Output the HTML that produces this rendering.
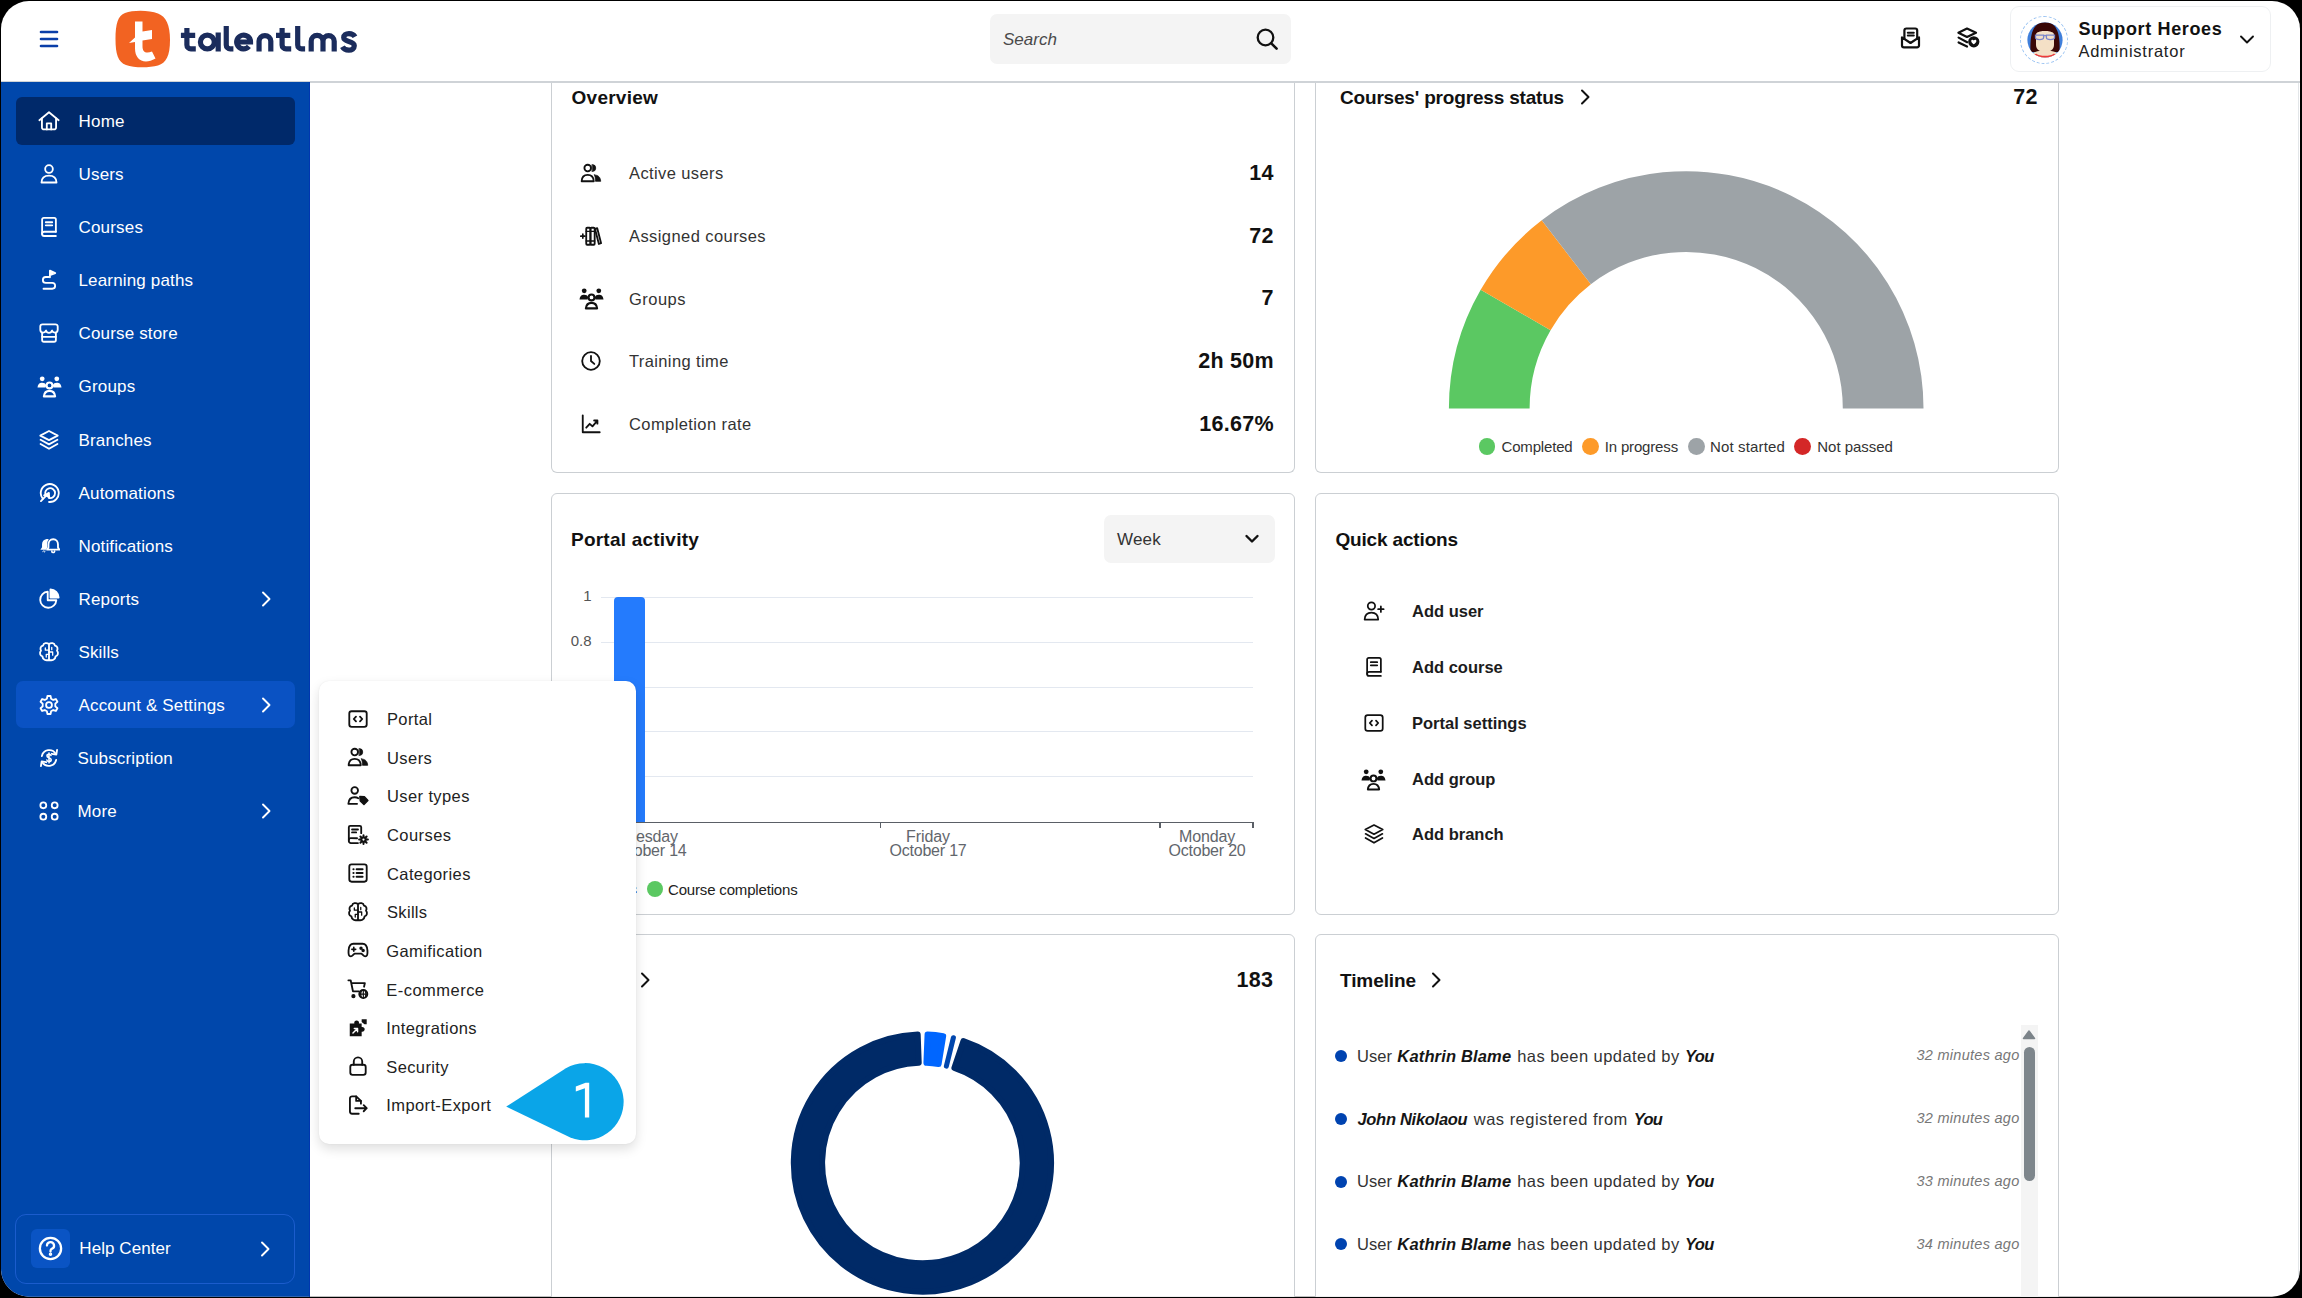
<!DOCTYPE html><html><head><meta charset="utf-8"><style>
html,body{margin:0;padding:0;background:#000;}
body{width:2302px;height:1298px;overflow:hidden;position:relative;font-family:"Liberation Sans",sans-serif;}
#win{position:absolute;left:0;top:0;width:2302px;height:1298px;background:#fff;overflow:hidden;clip-path:inset(1px 2px 1.3px 1px round 28px);}
.a{position:absolute;}
.t{position:absolute;white-space:nowrap;}
</style></head><body><div id="win">
<div class="a" style="left:0px;top:81px;width:2302px;height:2px;background:#cfd3d7;"></div>
<svg class="a" style="left:36px;top:27px" width="26" height="24" viewBox="0 0 26 24"><g stroke="#0a3ea8" stroke-width="2.6" stroke-linecap="round"><path d="M5 5 H21"/><path d="M5 12 H21"/><path d="M5 19 H21"/></g></svg>
<svg class="a" style="left:113px;top:9px" width="60" height="60" viewBox="0 0 60 60"><path d="M12 4 C20 1 36 1 45 4.5 C53 7.5 57 16 57 31 C57 47 53 54 45 56.5 C36 59 21 59 13 56 C5 53 2.5 45 2.5 30 C2.5 15 5 6.5 12 4 Z" fill="#f26322"/><path d="M22 12.5 H29.5 V22.5 L39 21 V30 L29.5 31.5 V37.5 C29.5 43 33 45 39 42.5 L42.5 49.5 C31 56 22 51 22 39.5 V33 L16 34 L22 28.5 Z" fill="#fff"/></svg>
<svg class="a" style="left:176px;top:20px" width="190" height="40" viewBox="176 20 190 40"><g fill="none" stroke="#1b2c5c" stroke-width="5.2"><path d="M186.9 28 V44.9 A4 4 0 0 0 190.9 48.9 H195.8 M180.9 35.4 H195.2"/><circle cx="207.35" cy="42" r="6.95"/><path d="M218.2 32.4 V51.5"/><path d="M226.25 25.9 V44.9 A4 4 0 0 0 230.25 48.9 H233.4"/><path d="M236.7 42 H250.5 A6.9 6.9 0 1 0 248.9 46.4"/><path d="M259.05 51.5 V41.2 A5.88 5.88 0 0 1 270.8 41.2 V51.5"/><path d="M282.1 28 V44.9 A4 4 0 0 0 286.1 48.9 H291.2 M276 35.4 H290.3"/><path d="M297.7 25.9 V44.9 A4 4 0 0 0 301.7 48.9 H305.1"/><path d="M311.2 51.5 V41.2 A5.9 5.9 0 0 1 323 41.2 V51.5 M323 41.2 A5.6 5.6 0 0 1 334.2 41.2 V51.5"/><path d="M355 36.8 C353.8 34.6 351.6 33.6 349 33.6 C345.9 33.6 343.7 35.2 343.7 37.6 C343.7 42.6 354.3 40.4 354.3 45.8 C354.3 48.6 351.8 50.2 348.8 50.2 C345.9 50.2 343.6 49 342.4 46.8"/></g></svg>
<div class="a" style="left:990px;top:14px;width:301px;height:50px;background:#f4f4f4;border-radius:7px;"></div>
<div class="t" style="top:31.01px;font-size:17px;line-height:17px;color:#4a4a4a;font-style:italic;letter-spacing:0.022px;left:1003.00px;">Search</div>
<svg class="a" style="left:1254.50px;top:26.50px;" width="24" height="24" viewBox="0 0 24 24" fill="none" stroke="#111" stroke-width="2.3" stroke-linecap="round" stroke-linejoin="round"><circle cx="10.5" cy="10.5" r="7.8"/><path d="M16.3 16.3 L21.6 21.6" stroke-width="2.6"/></svg>
<svg class="a" style="left:1896px;top:24px" width="30" height="28" viewBox="1896 24 30 28"><g fill="none" stroke="#111" stroke-width="2.2" stroke-linecap="round" stroke-linejoin="round"><path d="M1904.4 38.5 V30.5 a2 2 0 0 1 2-2 H1915.2 a2 2 0 0 1 2 2 V38.5"/><path d="M1907.8 32.7 H1913.8 M1907.8 35.4 H1913.8" stroke-width="2"/><path d="M1902 37.4 V45.4 a1.9 1.9 0 0 0 1.9 1.9 H1917.1 a1.9 1.9 0 0 0 1.9-1.9 V37.4 L1910.5 43 Z"/></g></svg>
<svg class="a" style="left:1954px;top:24px" width="30" height="28" viewBox="1954 24 30 28"><g fill="none" stroke="#111" stroke-width="2.2" stroke-linecap="round" stroke-linejoin="round"><path d="M1967 28.6 L1976 32.8 L1967 37 L1958.4 32.8 Z"/><path d="M1958.6 37.6 L1967.2 42.2 M1958.6 42.4 L1967 46.6"/><circle cx="1973.8" cy="41.8" r="5.6" fill="#111" stroke="none"/><path d="M1971.2 40.9 C1971.2 39.6 1972.9 39.1 1973.8 40.4 C1974.7 39.1 1976.4 39.6 1976.4 40.9 C1976.4 42.4 1973.8 44.3 1973.8 44.3 C1973.8 44.3 1971.2 42.4 1971.2 40.9 Z" fill="#fff" stroke="none"/></g></svg>
<div class="a" style="left:2010px;top:6px;width:261px;height:66px;border:1px solid #eef0f2;border-radius:9px;box-sizing:border-box;"></div>
<div class="a" style="left:2020px;top:16px;width:46px;height:46px;border:1.3px dashed #9cc4f2;border-radius:50%;"></div>
<svg class="a" style="left:2026px;top:21px" width="38" height="38" viewBox="2026 21 38 38"><defs><clipPath id="av"><circle cx="2045" cy="40" r="17.6"/></clipPath></defs><g clip-path="url(#av)">
<rect x="2026" y="21" width="38" height="38" fill="#3f7fdb"/>
<path d="M2030.5 52 C2030 40 2030.5 22 2045 22 C2059.5 22 2060 40 2059.5 52 Z" fill="#3a0707"/>
<path d="M2036 36 C2036 30.5 2039.5 29 2045 29 C2050.5 29 2054 30.5 2054 36 V45 C2054 49.5 2050 52 2045 52 C2040 52 2036 49.5 2036 45 Z" fill="#f4e0c6"/>
<path d="M2034.5 34 C2036 28 2041 26.5 2045 26.5 C2049 26.5 2054 28 2055.5 34 C2052 31.5 2048 31 2045 31 C2042 31 2038 31.5 2034.5 34 Z" fill="#3a0707"/>
<path d="M2028 60 C2029 53.5 2035 50.5 2045 50.5 C2055 50.5 2061 53.5 2062 60 Z" fill="#f4e0c6"/>
<path d="M2029 60 C2031 55.5 2034 54 2036.5 53.8 C2039 56.5 2051 56.5 2053.5 53.8 C2056 54 2059 55.5 2061 60 Z" fill="#ee3b3b"/>
<g fill="none" stroke="#7b86cc" stroke-width="1.3"><path d="M2035.5 35.2 H2043.6 V37.5 C2043.6 39 2042.5 39.6 2039.6 39.6 C2036.6 39.6 2035.5 39 2035.5 37.5 Z"/><path d="M2046.4 35.2 H2054.5 V37.5 C2054.5 39 2053.4 39.6 2050.4 39.6 C2047.5 39.6 2046.4 39 2046.4 37.5 Z"/><path d="M2043.6 35.6 H2046.4"/></g>
</g></svg>
<div class="t" style="top:19.96px;font-size:18px;line-height:18px;color:#111;font-weight:700;letter-spacing:0.641px;left:2078.40px;">Support Heroes</div>
<div class="t" style="top:43.33px;font-size:16.5px;line-height:16.5px;color:#222;letter-spacing:0.754px;left:2078.40px;">Administrator</div>
<svg class="a" style="left:2238.00px;top:30.00px;" width="18" height="18" viewBox="0 0 18 18" fill="none" stroke="#111" stroke-width="1.9" stroke-linecap="round" stroke-linejoin="round"><path d="M3 6.5 L9 12.5 L15 6.5"/></svg>
<div class="a" style="left:0px;top:82px;width:310px;height:1216px;background:#0047ab;"></div>
<div class="a" style="left:16px;top:97px;width:279px;height:48px;background:#00296a;border-radius:6px;"></div>
<div class="a" style="left:309px;top:82px;width:1px;height:1216px;background:#0037b0;"></div>
<div class="a" style="left:16px;top:681px;width:279px;height:47px;background:#0a52c3;border-radius:7px;"></div>
<svg class="a" style="left:38.00px;top:110.00px;" width="22" height="22" viewBox="0 0 24 24" fill="none" stroke="#fff" stroke-width="2" stroke-linecap="round" stroke-linejoin="round"><path d="M1.5 11.2 L12 2.5 L22.5 11.2"/><path d="M4.3 9.2 V19 a2.2 2.2 0 0 0 2.2 2.2 H17.5 a2.2 2.2 0 0 0 2.2-2.2 V9.2"/><path d="M9.6 21.2 V14.6 H14.4 V21.2"/></svg>
<div class="t" style="top:112.91px;font-size:17px;line-height:17px;color:#fff;letter-spacing:0.227px;left:78.50px;">Home</div>
<svg class="a" style="left:38.00px;top:163.10px;" width="22" height="22" viewBox="0 0 24 24" fill="none" stroke="#fff" stroke-width="2" stroke-linecap="round" stroke-linejoin="round"><circle cx="12" cy="6.6" r="4.2"/><path d="M3.8 21.3 C4 16 7.5 13.8 12 13.8 C16.5 13.8 20 16 20.2 21.3 Z"/></svg>
<div class="t" style="top:166.01px;font-size:17px;line-height:17px;color:#fff;letter-spacing:0.178px;left:78.50px;">Users</div>
<svg class="a" style="left:38.00px;top:216.20px;" width="22" height="22" viewBox="0 0 24 24" fill="none" stroke="#fff" stroke-width="2" stroke-linecap="round" stroke-linejoin="round"><path d="M19.5 17.2 V3.8 a1.8 1.8 0 0 0-1.8-1.8 H6.3 a1.8 1.8 0 0 0-1.8 1.8 V19.5"/><path d="M4.5 19.3 a2.2 2.2 0 0 1 2.2-2.1 H19.5 M19.5 21.8 H6.7 a2.2 2.2 0 0 1-2.2-2.2"/><path d="M8.5 6.8 H15.5 M8.5 10.2 H15.5"/></svg>
<div class="t" style="top:219.11px;font-size:17px;line-height:17px;color:#fff;letter-spacing:0.181px;left:78.50px;">Courses</div>
<svg class="a" style="left:38.00px;top:269.30px;" width="22" height="22" viewBox="0 0 24 24" fill="none" stroke="#fff" stroke-width="2" stroke-linecap="round" stroke-linejoin="round"><path d="M6 21.5 H15.5 a3.2 3.2 0 0 0 0-6.4 H8.5 a3.2 3.2 0 0 1 0-6.4 H11.5"/><path d="M13 9 V1.8 L18.8 4.4 L13 6.8" fill="#fff"/></svg>
<div class="t" style="top:272.21px;font-size:17px;line-height:17px;color:#fff;letter-spacing:0.161px;left:78.50px;">Learning paths</div>
<svg class="a" style="left:38.00px;top:322.40px;" width="22" height="22" viewBox="0 0 24 24" fill="none" stroke="#fff" stroke-width="2" stroke-linecap="round" stroke-linejoin="round"><path d="M5 2.5 H19 a2.5 2.5 0 0 1 2.5 2.5 V8.5 a3 3 0 0 1-3 3 a3.2 3.2 0 0 1-3.2-2.2 a3.4 3.4 0 0 1-6.6 0 a3.2 3.2 0 0 1-3.2 2.2 a3 3 0 0 1-3-3 V5 A2.5 2.5 0 0 1 5 2.5 Z"/><path d="M4.5 12 V19.5 a2 2 0 0 0 2 2 H17.5 a2 2 0 0 0 2-2 V12"/><path d="M4.5 16.2 H19.5"/></svg>
<div class="t" style="top:325.31px;font-size:17px;line-height:17px;color:#fff;letter-spacing:0.162px;left:78.50px;">Course store</div>
<svg class="a" style="left:36.50px;top:374.00px;" width="25" height="25" viewBox="0 0 24 24" fill="none" stroke="#fff" stroke-width="2" stroke-linecap="round" stroke-linejoin="round"><circle cx="12" cy="11" r="2.8"/><path d="M6.6 21.5 C7 17.8 9.2 16.2 12 16.2 C14.8 16.2 17 17.8 17.4 21.5 Z"/><circle cx="5" cy="4.6" r="2.3" fill="#fff" stroke="none"/><path d="M0.5 13 C0.8 9.5 2.6 8.3 5 8.3 C6.8 8.3 8.2 9 8.9 10.8 L8.2 13 Z" fill="#fff" stroke="none"/><circle cx="19" cy="4.6" r="2.3" fill="#fff" stroke="none"/><path d="M23.5 13 C23.2 9.5 21.4 8.3 19 8.3 C17.2 8.3 15.8 9 15.1 10.8 L15.8 13 Z" fill="#fff" stroke="none"/></svg>
<div class="t" style="top:378.41px;font-size:17px;line-height:17px;color:#fff;letter-spacing:0.186px;left:78.50px;">Groups</div>
<svg class="a" style="left:38.00px;top:428.60px;" width="22" height="22" viewBox="0 0 24 24" fill="none" stroke="#fff" stroke-width="2" stroke-linecap="round" stroke-linejoin="round"><path d="M12 2.2 L21.5 7.2 L12 12.2 L2.5 7.2 Z"/><path d="M2.8 11.8 L12 16.8 L21.2 11.8"/><path d="M2.8 16.4 L12 21.6 L21.2 16.4"/></svg>
<div class="t" style="top:431.51px;font-size:17px;line-height:17px;color:#fff;letter-spacing:0.180px;left:78.50px;">Branches</div>
<svg class="a" style="left:38.00px;top:481.70px;" width="22" height="22" viewBox="0 0 24 24" fill="none" stroke="#fff" stroke-width="2" stroke-linecap="round" stroke-linejoin="round"><path d="M5.2 18.2 A9.8 9.8 0 1 1 12 21.8"/><path d="M8.4 14.6 A5.4 5.4 0 1 1 12 17.4"/><path d="M11.6 12.2 L3.2 20.8"/><path d="M11.8 12 L12.3 17.2 L10.2 15.4 L6.7 14.6 Z" fill="#fff"/></svg>
<div class="t" style="top:484.61px;font-size:17px;line-height:17px;color:#fff;letter-spacing:0.172px;left:78.50px;">Automations</div>
<svg class="a" style="left:38.00px;top:534.80px;" width="22" height="22" viewBox="0 0 24 24" fill="none" stroke="#fff" stroke-width="2" stroke-linecap="round" stroke-linejoin="round"><path d="M16.6 4.6 C13.2 4.6 11.4 7.4 11.4 10.4 V13.6 L9.9 16 H23.3 L21.8 13.6 V10.4 C21.8 7.4 20 4.6 16.6 4.6 Z" stroke-width="2"/><path d="M15.1 17.6 a1.5 1.5 0 0 0 3 0" stroke-width="1.8"/><path d="M9.4 4.4 C6.2 4.8 4.4 7.4 4.4 10.4 V13.4 L2.6 16 H8.8 L10 13.8 V10.4 C10 8 10.5 5.9 11.8 4.8 C11.1 4.5 10.3 4.4 9.4 4.4 Z" fill="#fff" stroke="none"/><path d="M5.2 18 L6.4 17.2 M7.2 18.6 L7.6 17.4" stroke-width="1"/></svg>
<div class="t" style="top:537.71px;font-size:17px;line-height:17px;color:#fff;letter-spacing:0.142px;left:78.50px;">Notifications</div>
<svg class="a" style="left:38.00px;top:587.90px;" width="22" height="22" viewBox="0 0 24 24" fill="none" stroke="#fff" stroke-width="2" stroke-linecap="round" stroke-linejoin="round"><path d="M10.6 4 A8.8 8.8 0 1 0 20 13.4 H10.6 Z"/><path d="M13.6 1.5 A9 9 0 0 1 22.5 10.4 H13.6 Z" fill="#fff"/></svg>
<div class="t" style="top:590.81px;font-size:17px;line-height:17px;color:#fff;letter-spacing:0.170px;left:78.50px;">Reports</div>
<svg class="a" style="left:256.50px;top:589.90px;" width="18" height="18" viewBox="0 0 18 18" fill="none" stroke="#fff" stroke-width="1.9" stroke-linecap="round" stroke-linejoin="round"><path d="M6 2.5 L12.5 9 L6 15.5"/></svg>
<svg class="a" style="left:38.00px;top:641.00px;" width="22" height="22" viewBox="0 0 24 24" fill="none" stroke="#fff" stroke-width="2" stroke-linecap="round" stroke-linejoin="round"><path d="M12 3.5 V21 M12 3.5 C10 1.5 6 2 5.5 5 C2.8 5.4 2 8.5 3.3 10.5 C1.3 12.5 2.2 16.3 4.8 16.8 C5 20 8.5 22 12 20.5 C15.5 22 19 20 19.2 16.8 C21.8 16.3 22.7 12.5 20.7 10.5 C22 8.5 21.2 5.4 18.5 5 C18 2 14 1.5 12 3.5 Z"/><path d="M12 10 H8 V7.5 M12 14.5 H9 V17.5 M12 12 H16 V15.5 M15 7 V9.5" stroke-width="1.4"/></svg>
<div class="t" style="top:643.91px;font-size:17px;line-height:17px;color:#fff;letter-spacing:0.132px;left:78.50px;">Skills</div>
<svg class="a" style="left:38.00px;top:694.10px;" width="22" height="22" viewBox="0 0 24 24" fill="none" stroke="#fff" stroke-width="2" stroke-linecap="round" stroke-linejoin="round"><path d="M10.3 2.2 H13.7 L14.3 5.2 L16.6 6.5 L19.5 5.5 L21.2 8.4 L18.9 10.5 V13.5 L21.2 15.6 L19.5 18.5 L16.6 17.5 L14.3 18.8 L13.7 21.8 H10.3 L9.7 18.8 L7.4 17.5 L4.5 18.5 L2.8 15.6 L5.1 13.5 V10.5 L2.8 8.4 L4.5 5.5 L7.4 6.5 L9.7 5.2 Z"/><circle cx="12" cy="12" r="3.2"/></svg>
<div class="t" style="top:697.01px;font-size:17px;line-height:17px;color:#fff;letter-spacing:0.160px;left:78.50px;">Account &amp; Settings</div>
<svg class="a" style="left:256.50px;top:696.10px;" width="18" height="18" viewBox="0 0 18 18" fill="none" stroke="#fff" stroke-width="1.9" stroke-linecap="round" stroke-linejoin="round"><path d="M6 2.5 L12.5 9 L6 15.5"/></svg>
<svg class="a" style="left:38.00px;top:747.20px;" width="22" height="22" viewBox="0 0 24 24" fill="none" stroke="#fff" stroke-width="2" stroke-linecap="round" stroke-linejoin="round"><path d="M4.2 10 A8.2 8.2 0 0 1 19.4 7.6"/><path d="M19.8 14 A8.2 8.2 0 0 1 4.6 16.4"/><path d="M20.8 3.2 L20 8.4 L15 7.4" /><path d="M3.2 20.8 L4 15.6 L9 16.6"/><path d="M14.2 9.3 C13.8 8.3 12.9 7.9 12 7.9 C10.7 7.9 9.8 8.6 9.8 9.7 C9.8 12.2 14.4 11.2 14.4 13.9 C14.4 15.1 13.4 15.9 12 15.9 C10.9 15.9 10 15.3 9.7 14.3 M12 6.5 V17.3" stroke-width="1.7"/></svg>
<div class="t" style="top:750.11px;font-size:17px;line-height:17px;color:#fff;letter-spacing:0.156px;left:77.50px;">Subscription</div>
<svg class="a" style="left:38.00px;top:800.30px;" width="22" height="22" viewBox="0 0 24 24" fill="none" stroke="#fff" stroke-width="2" stroke-linecap="round" stroke-linejoin="round"><circle cx="5.8" cy="5.8" r="3.2"/><circle cx="18.2" cy="5.8" r="3.2"/><circle cx="5.8" cy="18.2" r="3.2"/><circle cx="18.2" cy="18.2" r="3.2"/></svg>
<div class="t" style="top:803.21px;font-size:17px;line-height:17px;color:#fff;letter-spacing:0.194px;left:77.50px;">More</div>
<svg class="a" style="left:256.50px;top:802.30px;" width="18" height="18" viewBox="0 0 18 18" fill="none" stroke="#fff" stroke-width="1.9" stroke-linecap="round" stroke-linejoin="round"><path d="M6 2.5 L12.5 9 L6 15.5"/></svg>
<div class="a" style="left:15px;top:1214px;width:280px;height:70px;border:1.2px solid #1b5ccc;border-radius:11px;box-sizing:border-box;"></div>
<div class="a" style="left:31px;top:1229px;width:39px;height:39px;background:#0a54c4;border-radius:6px;"></div>
<svg class="a" style="left:37.50px;top:1236.10px;" width="25" height="25" viewBox="0 0 24 24" fill="none" stroke="#fff" stroke-width="2.2" stroke-linecap="round" stroke-linejoin="round"><circle cx="12" cy="12" r="10.2"/><path d="M8.6 9.2 a3.4 3.4 0 1 1 4.6 3.2 c-0.9 0.4-1.2 1-1.2 1.9 v0.6"/><circle cx="12" cy="17.6" r="0.6" fill="#fff"/></svg>
<div class="t" style="top:1240.21px;font-size:17px;line-height:17px;color:#fff;letter-spacing:0.071px;left:79.30px;">Help Center</div>
<svg class="a" style="left:255.50px;top:1240.00px;" width="18" height="18" viewBox="0 0 18 18" fill="none" stroke="#fff" stroke-width="1.9" stroke-linecap="round" stroke-linejoin="round"><path d="M6 2.5 L12.5 9 L6 15.5"/></svg>
<div class="a" style="left:551px;top:83px;width:744px;height:390px;border:1.2px solid #cbcfd3;box-sizing:border-box;border-radius:6px;background:#fff;border-top:none;border-top-left-radius:0;border-top-right-radius:0;"></div>
<div class="t" style="top:87.92px;font-size:19px;line-height:19px;color:#111;font-weight:700;letter-spacing:0.238px;left:571.60px;">Overview</div>
<svg class="a" style="left:580.00px;top:162.00px;" width="22" height="22" viewBox="0 0 24 24" fill="none" stroke="#111" stroke-width="2" stroke-linecap="round" stroke-linejoin="round"><circle cx="8.4" cy="6.6" r="3.6"/><path d="M1.8 21 C2 16 4.6 14 8.4 14 C12.2 14 14.8 16 15 21 Z"/><path d="M13.4 2.8 A3.8 3.8 0 0 1 13.4 10.4 Z" fill="#111" stroke="#111" stroke-width="0.8"/><path d="M15.8 14.1 C20 14.3 22.3 16.6 22.6 21.1 H16.9 C16.8 18 16.5 15.6 15.8 14.1 Z" fill="#111" stroke="#111" stroke-width="0.8"/></svg>
<div class="t" style="top:165.03px;font-size:16.5px;line-height:16.5px;color:#333;letter-spacing:0.389px;left:629.00px;">Active users</div>
<div class="t" style="top:162.80px;font-size:21.5px;line-height:21.5px;color:#111;font-weight:700;letter-spacing:0.239px;right:1028.26px;">14</div>
<svg class="a" style="left:580.00px;top:224.80px;" width="22" height="22" viewBox="0 0 24 24" fill="none" stroke="#111" stroke-width="2" stroke-linecap="round" stroke-linejoin="round"><rect x="6.8" y="3" width="4.6" height="18.5" rx="1"/><rect x="11.4" y="3" width="4.6" height="18.5" rx="1"/><path d="M16.4 4.3 L18.8 3.5 L23 19.9 L20.6 20.7 Z"/><path d="M0.8 12.2 H5.4 M3.1 9.9 V14.5" stroke-width="1.8"/><path d="M6.8 7 H16 M6.8 17.5 H16" stroke-width="1.5"/></svg>
<div class="t" style="top:227.83px;font-size:16.5px;line-height:16.5px;color:#333;letter-spacing:0.423px;left:629.00px;">Assigned courses</div>
<div class="t" style="top:225.60px;font-size:21.5px;line-height:21.5px;color:#111;font-weight:700;letter-spacing:0.239px;right:1028.26px;">72</div>
<svg class="a" style="left:578.50px;top:286.10px;" width="25" height="25" viewBox="0 0 24 24" fill="none" stroke="#111" stroke-width="2" stroke-linecap="round" stroke-linejoin="round"><circle cx="12" cy="11" r="2.8"/><path d="M6.6 21.5 C7 17.8 9.2 16.2 12 16.2 C14.8 16.2 17 17.8 17.4 21.5 Z"/><circle cx="5" cy="4.6" r="2.3" fill="#111" stroke="none"/><path d="M0.5 13 C0.8 9.5 2.6 8.3 5 8.3 C6.8 8.3 8.2 9 8.9 10.8 L8.2 13 Z" fill="#111" stroke="none"/><circle cx="19" cy="4.6" r="2.3" fill="#111" stroke="none"/><path d="M23.5 13 C23.2 9.5 21.4 8.3 19 8.3 C17.2 8.3 15.8 9 15.1 10.8 L15.8 13 Z" fill="#111" stroke="none"/></svg>
<div class="t" style="top:290.63px;font-size:16.5px;line-height:16.5px;color:#333;letter-spacing:0.469px;left:629.00px;">Groups</div>
<div class="t" style="top:288.40px;font-size:21.5px;line-height:21.5px;color:#111;font-weight:700;letter-spacing:0.239px;right:1028.26px;">7</div>
<svg class="a" style="left:580.00px;top:350.40px;" width="22" height="22" viewBox="0 0 24 24" fill="none" stroke="#111" stroke-width="2" stroke-linecap="round" stroke-linejoin="round"><circle cx="12" cy="12" r="9.6"/><path d="M12 6.5 V12 L15.6 15.2"/></svg>
<div class="t" style="top:353.43px;font-size:16.5px;line-height:16.5px;color:#333;letter-spacing:0.379px;left:629.00px;">Training time</div>
<div class="t" style="top:351.20px;font-size:21.5px;line-height:21.5px;color:#111;font-weight:700;letter-spacing:0.247px;right:1028.25px;">2h 50m</div>
<svg class="a" style="left:580.00px;top:413.20px;" width="22" height="22" viewBox="0 0 24 24" fill="none" stroke="#111" stroke-width="2" stroke-linecap="round" stroke-linejoin="round"><path d="M3 2.5 V21 H21.5"/><path d="M6.8 16 L10.6 11.8 L13.6 14.6 L19 8.4 M15.4 8.2 H19 V11.6"/></svg>
<div class="t" style="top:416.23px;font-size:16.5px;line-height:16.5px;color:#333;letter-spacing:0.404px;left:629.00px;">Completion rate</div>
<div class="t" style="top:414.00px;font-size:21.5px;line-height:21.5px;color:#111;font-weight:700;letter-spacing:0.243px;right:1028.26px;">16.67%</div>
<div class="a" style="left:1315px;top:83px;width:744px;height:390px;border:1.2px solid #cbcfd3;box-sizing:border-box;border-radius:6px;background:#fff;border-top:none;border-top-left-radius:0;border-top-right-radius:0;"></div>
<div class="t" style="top:87.92px;font-size:19px;line-height:19px;color:#111;font-weight:700;letter-spacing:-0.182px;left:1340.00px;">Courses' progress status</div>
<svg class="a" style="left:1575.50px;top:88.00px;" width="18" height="18" viewBox="0 0 18 18" fill="none" stroke="#111" stroke-width="2" stroke-linecap="round" stroke-linejoin="round"><path d="M6 2.5 L12.5 9 L6 15.5"/></svg>
<div class="t" style="top:87.30px;font-size:21.5px;line-height:21.5px;color:#111;font-weight:700;letter-spacing:0.239px;right:264.26px;">72</div>
<svg class="a" style="left:1315px;top:82px" width="744" height="391" viewBox="0 0 744 391"><path d="M133.90 326.50 A237.3 237.3 0 0 1 165.69 207.85 L235.58 248.20 A156.6 156.6 0 0 0 214.60 326.50 Z" fill="#5bc862"/><path d="M165.69 207.85 A237.3 237.3 0 0 1 226.74 138.24 L275.87 202.26 A156.6 156.6 0 0 0 235.58 248.20 Z" fill="#fd9a29"/><path d="M226.74 138.24 A237.3 237.3 0 0 1 608.50 326.50 L527.80 326.50 A156.6 156.6 0 0 0 275.87 202.26 Z" fill="#9da3a7"/></svg>
<div class="a" style="left:1478.60px;top:438.30px;width:16.8px;height:16.8px;border-radius:50%;background:#5bc862"></div>
<div class="t" style="top:439.10px;font-size:15px;line-height:15px;color:#333;letter-spacing:-0.171px;left:1501.50px;">Completed</div>
<div class="a" style="left:1582.30px;top:438.30px;width:16.8px;height:16.8px;border-radius:50%;background:#fd9a29"></div>
<div class="t" style="top:439.10px;font-size:15px;line-height:15px;color:#333;letter-spacing:-0.158px;left:1604.70px;">In progress</div>
<div class="a" style="left:1688.40px;top:438.30px;width:16.8px;height:16.8px;border-radius:50%;background:#9da3a7"></div>
<div class="t" style="top:439.10px;font-size:15px;line-height:15px;color:#333;letter-spacing:0.148px;left:1710.00px;">Not started</div>
<div class="a" style="left:1794.40px;top:438.30px;width:16.8px;height:16.8px;border-radius:50%;background:#d42727"></div>
<div class="t" style="top:439.10px;font-size:15px;line-height:15px;color:#333;letter-spacing:-0.038px;left:1817.30px;">Not passed</div>
<div class="a" style="left:551px;top:493px;width:744px;height:421.5px;border:1.2px solid #cbcfd3;box-sizing:border-box;border-radius:6px;background:#fff;"></div>
<div class="t" style="top:529.92px;font-size:19px;line-height:19px;color:#111;font-weight:700;letter-spacing:0.226px;left:571.00px;">Portal activity</div>
<div class="a" style="left:1104px;top:514.5px;width:171px;height:48.0px;background:#f4f4f4;border-radius:7px;"></div>
<div class="t" style="top:530.61px;font-size:17px;line-height:17px;color:#333;letter-spacing:0.163px;left:1117.00px;">Week</div>
<svg class="a" style="left:1242.60px;top:530.00px;" width="18" height="18" viewBox="0 0 18 18" fill="none" stroke="#111" stroke-width="2.4" stroke-linecap="round" stroke-linejoin="round"><path d="M3.5 6 L9 11.5 L14.5 6"/></svg>
<div class="a" style="left:601px;top:596.5px;width:652px;height:1.0px;background:#e3e8f0;"></div>
<div class="a" style="left:601px;top:641.5px;width:652px;height:1.0px;background:#e3e8f0;"></div>
<div class="a" style="left:601px;top:686.5px;width:652px;height:1.0px;background:#e3e8f0;"></div>
<div class="a" style="left:601px;top:731.0px;width:652px;height:1.0px;background:#e3e8f0;"></div>
<div class="a" style="left:601px;top:776.0px;width:652px;height:1.0px;background:#e3e8f0;"></div>
<div class="a" style="left:601px;top:821.5px;width:653px;height:1.5px;background:#5a5f66;"></div>
<div class="a" style="left:879.9px;top:822px;width:1.400000000000091px;height:6px;background:#5a5f66;"></div>
<div class="a" style="left:1159.3px;top:822px;width:1.400000000000091px;height:6px;background:#5a5f66;"></div>
<div class="a" style="left:1252.3px;top:822px;width:1.400000000000091px;height:6px;background:#5a5f66;"></div>
<div class="a" style="left:614px;top:597px;width:30.5px;height:225px;background:#247bfd;border-radius:4px 4px 0 0;"></div>
<div class="t" style="top:587.80px;font-size:15px;line-height:15px;color:#555;right:1710.50px;">1</div>
<div class="t" style="top:632.80px;font-size:15px;line-height:15px;color:#555;right:1710.50px;">0.8</div>
<div class="t" style="top:677.80px;font-size:15px;line-height:15px;color:#555;right:1710.50px;">0.6</div>
<div class="t" style="top:722.80px;font-size:15px;line-height:15px;color:#555;right:1710.50px;">0.4</div>
<div class="t" style="top:767.80px;font-size:15px;line-height:15px;color:#555;right:1710.50px;">0.2</div>
<div class="t" style="top:812.80px;font-size:15px;line-height:15px;color:#555;right:1710.50px;">0</div>
<div class="t" style="top:828.66px;font-size:16px;line-height:16px;color:#62666c;letter-spacing:-0.130px;left:618.07px;">Tuesday</div>
<div class="t" style="top:843.26px;font-size:16px;line-height:16px;color:#62666c;letter-spacing:-0.216px;left:609.50px;">October 14</div>
<div class="t" style="top:828.66px;font-size:16px;line-height:16px;color:#62666c;letter-spacing:-0.111px;left:906.11px;">Friday</div>
<div class="t" style="top:843.26px;font-size:16px;line-height:16px;color:#62666c;letter-spacing:-0.216px;left:889.50px;">October 17</div>
<div class="t" style="top:828.66px;font-size:16px;line-height:16px;color:#62666c;letter-spacing:-0.142px;left:1178.97px;">Monday</div>
<div class="t" style="top:843.26px;font-size:16px;line-height:16px;color:#62666c;letter-spacing:-0.216px;left:1168.50px;">October 20</div>
<div class="a" style="left:646.5px;top:881px;width:16px;height:16px;border-radius:50%;background:#5bc862"></div>
<div class="t" style="top:881.80px;font-size:15px;line-height:15px;color:#222;letter-spacing:-0.170px;left:668.00px;">Course completions</div>
<div class="a" style="left:635.6px;top:887px;width:1.6000000000000227px;height:1.6000000000000227px;background:#9fd0f0;border-radius:50%;"></div>
<div class="a" style="left:635.6px;top:891.3px;width:1.6000000000000227px;height:1.6000000000000227px;background:#3d8be6;border-radius:50%;"></div>
<div class="a" style="left:1315px;top:493px;width:744px;height:421.5px;border:1.2px solid #cbcfd3;box-sizing:border-box;border-radius:6px;background:#fff;"></div>
<div class="t" style="top:529.92px;font-size:19px;line-height:19px;color:#111;font-weight:700;letter-spacing:-0.154px;left:1335.40px;">Quick actions</div>
<svg class="a" style="left:1362.80px;top:600.00px;" width="22" height="22" viewBox="0 0 24 24" fill="none" stroke="#111" stroke-width="1.9" stroke-linecap="round" stroke-linejoin="round"><circle cx="9.2" cy="6.6" r="4"/><path d="M1.8 21.3 C2 15.8 5 13.8 9.2 13.8 C13.4 13.8 16.4 15.8 16.6 21.3 Z"/><path d="M19.5 7 V13 M16.5 10 H22.5"/></svg>
<div class="t" style="top:603.03px;font-size:16.5px;line-height:16.5px;color:#1c1c1c;font-weight:700;left:1412.00px;">Add user</div>
<svg class="a" style="left:1362.80px;top:656.00px;" width="22" height="22" viewBox="0 0 24 24" fill="none" stroke="#111" stroke-width="1.9" stroke-linecap="round" stroke-linejoin="round"><path d="M19.5 17.2 V3.8 a1.8 1.8 0 0 0-1.8-1.8 H6.3 a1.8 1.8 0 0 0-1.8 1.8 V19.5"/><path d="M4.5 19.3 a2.2 2.2 0 0 1 2.2-2.1 H19.5 M19.5 21.8 H6.7 a2.2 2.2 0 0 1-2.2-2.2"/><path d="M8.5 6.8 H15.5 M8.5 10.2 H15.5"/></svg>
<div class="t" style="top:659.03px;font-size:16.5px;line-height:16.5px;color:#1c1c1c;font-weight:700;left:1412.00px;">Add course</div>
<svg class="a" style="left:1362.80px;top:711.50px;" width="22" height="22" viewBox="0 0 24 24" fill="none" stroke="#111" stroke-width="1.9" stroke-linecap="round" stroke-linejoin="round"><rect x="2.5" y="3.5" width="19" height="17" rx="2.6"/><path d="M9.8 9.4 L7.4 12 L9.8 14.6 M14.2 9.4 L16.6 12 L14.2 14.6"/></svg>
<div class="t" style="top:714.53px;font-size:16.5px;line-height:16.5px;color:#1c1c1c;font-weight:700;left:1412.00px;">Portal settings</div>
<svg class="a" style="left:1361.30px;top:766.50px;" width="25" height="25" viewBox="0 0 24 24" fill="none" stroke="#111" stroke-width="1.9" stroke-linecap="round" stroke-linejoin="round"><circle cx="12" cy="11" r="2.8"/><path d="M6.6 21.5 C7 17.8 9.2 16.2 12 16.2 C14.8 16.2 17 17.8 17.4 21.5 Z"/><circle cx="5" cy="4.6" r="2.3" fill="#111" stroke="none"/><path d="M0.5 13 C0.8 9.5 2.6 8.3 5 8.3 C6.8 8.3 8.2 9 8.9 10.8 L8.2 13 Z" fill="#111" stroke="none"/><circle cx="19" cy="4.6" r="2.3" fill="#111" stroke="none"/><path d="M23.5 13 C23.2 9.5 21.4 8.3 19 8.3 C17.2 8.3 15.8 9 15.1 10.8 L15.8 13 Z" fill="#111" stroke="none"/></svg>
<div class="t" style="top:771.03px;font-size:16.5px;line-height:16.5px;color:#1c1c1c;font-weight:700;left:1412.00px;">Add group</div>
<svg class="a" style="left:1362.80px;top:823.00px;" width="22" height="22" viewBox="0 0 24 24" fill="none" stroke="#111" stroke-width="1.9" stroke-linecap="round" stroke-linejoin="round"><path d="M12 2.2 L21.5 7.2 L12 12.2 L2.5 7.2 Z"/><path d="M2.8 11.8 L12 16.8 L21.2 11.8"/><path d="M2.8 16.4 L12 21.6 L21.2 16.4"/></svg>
<div class="t" style="top:826.03px;font-size:16.5px;line-height:16.5px;color:#1c1c1c;font-weight:700;left:1412.00px;">Add branch</div>
<div class="a" style="left:551px;top:934px;width:744px;height:406px;border:1.2px solid #cbcfd3;box-sizing:border-box;border-radius:6px;background:#fff;"></div>
<svg class="a" style="left:636.00px;top:971.00px;" width="18" height="18" viewBox="0 0 18 18" fill="none" stroke="#111" stroke-width="2" stroke-linecap="round" stroke-linejoin="round"><path d="M6 2.5 L12.5 9 L6 15.5"/></svg>
<div class="t" style="top:969.80px;font-size:21.5px;line-height:21.5px;color:#111;font-weight:700;letter-spacing:0.309px;right:1028.69px;">183</div>
<svg class="a" style="left:551px;top:935px" width="744" height="405" viewBox="0 0 744 405"><path d="M412.42 106.12 A128.6 128.6 0 1 1 366.69 99.49 L367.72 127.77 A100.3 100.3 0 1 0 403.39 132.94 Z" fill="#002a67" stroke="#002a67" stroke-width="6" stroke-linejoin="round"/><path d="M376.56 99.50 A128.6 128.6 0 0 1 392.18 101.09 L387.61 129.02 A100.3 100.3 0 0 0 375.43 127.78 Z" fill="#0066ff" stroke="#0066ff" stroke-width="6" stroke-linejoin="round"/><path d="M395.37 131.12 L402.41 102.68" stroke="#0046ad" stroke-width="5" stroke-linecap="round"/></svg>
<div class="a" style="left:1315px;top:934px;width:744px;height:406px;border:1.2px solid #cbcfd3;box-sizing:border-box;border-radius:6px;background:#fff;"></div>
<div class="t" style="top:970.92px;font-size:19px;line-height:19px;color:#111;font-weight:700;letter-spacing:-0.092px;left:1340.00px;">Timeline</div>
<svg class="a" style="left:1426.70px;top:971.00px;" width="18" height="18" viewBox="0 0 18 18" fill="none" stroke="#111" stroke-width="2" stroke-linecap="round" stroke-linejoin="round"><path d="M6 2.5 L12.5 9 L6 15.5"/></svg>
<div class="a" style="left:1335.20px;top:1049.90px;width:12.2px;height:12.2px;border-radius:50%;background:#0043b0"></div>
<div class="t" style="top:1047.83px;font-size:16.5px;line-height:16.5px;color:#333;letter-spacing:0.040px;left:1357.00px;">User</div>
<div class="t" style="top:1047.83px;font-size:16.5px;line-height:16.5px;color:#161616;font-weight:700;font-style:italic;letter-spacing:0.165px;left:1397.30px;">Kathrin Blame</div>
<div class="t" style="top:1047.83px;font-size:16.5px;line-height:16.5px;color:#333;letter-spacing:0.440px;left:1517.20px;">has been updated by</div>
<div class="t" style="top:1047.83px;font-size:16.5px;line-height:16.5px;color:#161616;font-weight:700;font-style:italic;letter-spacing:-0.651px;left:1685.00px;">You</div>
<div class="t" style="top:1048.43px;font-size:14.5px;line-height:14.5px;color:#777;font-style:italic;letter-spacing:0.275px;right:282.53px;">32 minutes ago</div>
<div class="a" style="left:1335.20px;top:1112.70px;width:12.2px;height:12.2px;border-radius:50%;background:#0043b0"></div>
<div class="t" style="top:1110.63px;font-size:16.5px;line-height:16.5px;color:#161616;font-weight:700;font-style:italic;letter-spacing:-0.283px;left:1357.40px;">John Nikolaou</div>
<div class="t" style="top:1110.63px;font-size:16.5px;line-height:16.5px;color:#333;letter-spacing:0.480px;left:1473.80px;">was registered from</div>
<div class="t" style="top:1110.63px;font-size:16.5px;line-height:16.5px;color:#161616;font-weight:700;font-style:italic;letter-spacing:-0.651px;left:1633.70px;">You</div>
<div class="t" style="top:1111.23px;font-size:14.5px;line-height:14.5px;color:#777;font-style:italic;letter-spacing:0.275px;right:282.53px;">32 minutes ago</div>
<div class="a" style="left:1335.20px;top:1175.50px;width:12.2px;height:12.2px;border-radius:50%;background:#0043b0"></div>
<div class="t" style="top:1173.43px;font-size:16.5px;line-height:16.5px;color:#333;letter-spacing:0.040px;left:1357.00px;">User</div>
<div class="t" style="top:1173.43px;font-size:16.5px;line-height:16.5px;color:#161616;font-weight:700;font-style:italic;letter-spacing:0.165px;left:1397.30px;">Kathrin Blame</div>
<div class="t" style="top:1173.43px;font-size:16.5px;line-height:16.5px;color:#333;letter-spacing:0.440px;left:1517.20px;">has been updated by</div>
<div class="t" style="top:1173.43px;font-size:16.5px;line-height:16.5px;color:#161616;font-weight:700;font-style:italic;letter-spacing:-0.651px;left:1685.00px;">You</div>
<div class="t" style="top:1174.03px;font-size:14.5px;line-height:14.5px;color:#777;font-style:italic;letter-spacing:0.275px;right:282.53px;">33 minutes ago</div>
<div class="a" style="left:1335.20px;top:1238.30px;width:12.2px;height:12.2px;border-radius:50%;background:#0043b0"></div>
<div class="t" style="top:1236.23px;font-size:16.5px;line-height:16.5px;color:#333;letter-spacing:0.040px;left:1357.00px;">User</div>
<div class="t" style="top:1236.23px;font-size:16.5px;line-height:16.5px;color:#161616;font-weight:700;font-style:italic;letter-spacing:0.165px;left:1397.30px;">Kathrin Blame</div>
<div class="t" style="top:1236.23px;font-size:16.5px;line-height:16.5px;color:#333;letter-spacing:0.440px;left:1517.20px;">has been updated by</div>
<div class="t" style="top:1236.23px;font-size:16.5px;line-height:16.5px;color:#161616;font-weight:700;font-style:italic;letter-spacing:-0.651px;left:1685.00px;">You</div>
<div class="t" style="top:1236.83px;font-size:14.5px;line-height:14.5px;color:#777;font-style:italic;letter-spacing:0.275px;right:282.53px;">34 minutes ago</div>
<div class="a" style="left:2021px;top:1025px;width:17px;height:273px;background:#f4f4f4;"></div>
<svg class="a" style="left:2022px;top:1029px" width="14" height="12" viewBox="0 0 14 12"><path d="M7 2 L12.5 9.5 H1.5 Z" fill="#7b8389" stroke="#7b8389" stroke-width="1.5" stroke-linejoin="round"/></svg>
<div class="a" style="left:2024px;top:1046.5px;width:11px;height:134.5px;background:#7e868c;border-radius:5.5px;"></div>
<div class="a" style="left:2298px;top:83px;width:1px;height:1215px;background:#e3e6e9;"></div>
<div class="a" style="left:318.5px;top:681px;width:317px;height:462.5px;background:#fff;border-radius:10px;box-shadow:0 5px 12px rgba(0,0,0,0.13),0 0 1.5px rgba(0,0,0,0.08);"></div>
<svg class="a" style="left:347.00px;top:707.70px;" width="22" height="22" viewBox="0 0 24 24" fill="none" stroke="#111" stroke-width="2" stroke-linecap="round" stroke-linejoin="round"><rect x="2.5" y="3.5" width="19" height="17" rx="2.6"/><path d="M9.8 9.4 L7.4 12 L9.8 14.6 M14.2 9.4 L16.6 12 L14.2 14.6"/></svg>
<div class="t" style="top:711.23px;font-size:16.5px;line-height:16.5px;color:#222;letter-spacing:0.359px;left:387.00px;">Portal</div>
<svg class="a" style="left:347.00px;top:746.32px;" width="22" height="22" viewBox="0 0 24 24" fill="none" stroke="#111" stroke-width="2" stroke-linecap="round" stroke-linejoin="round"><circle cx="8.4" cy="6.6" r="3.6"/><path d="M1.8 21 C2 16 4.6 14 8.4 14 C12.2 14 14.8 16 15 21 Z"/><path d="M13.4 2.8 A3.8 3.8 0 0 1 13.4 10.4 Z" fill="#111" stroke="#111" stroke-width="0.8"/><path d="M15.8 14.1 C20 14.3 22.3 16.6 22.6 21.1 H16.9 C16.8 18 16.5 15.6 15.8 14.1 Z" fill="#111" stroke="#111" stroke-width="0.8"/></svg>
<div class="t" style="top:749.85px;font-size:16.5px;line-height:16.5px;color:#222;letter-spacing:0.431px;left:387.00px;">Users</div>
<svg class="a" style="left:347.00px;top:784.94px;" width="22" height="22" viewBox="0 0 24 24" fill="none" stroke="#111" stroke-width="2" stroke-linecap="round" stroke-linejoin="round"><circle cx="8.4" cy="5.9" r="3.6"/><path d="M1.5 20.5 C1.8 15.6 4.4 13.4 8.4 13.4 C10 13.4 11.3 13.7 12.3 14.4 M1.5 20.5 H11"/><path d="M14 12.5 L19 12.8 L22.8 16.8 L18.5 21.2 L14.5 17.4 Z" fill="#111" stroke-width="1.6"/></svg>
<div class="t" style="top:788.47px;font-size:16.5px;line-height:16.5px;color:#222;letter-spacing:0.394px;left:387.00px;">User types</div>
<svg class="a" style="left:347.00px;top:823.56px;" width="22" height="22" viewBox="0 0 24 24" fill="none" stroke="#111" stroke-width="2" stroke-linecap="round" stroke-linejoin="round"><path d="M15.5 10 V3.6 a1.6 1.6 0 0 0-1.6-1.6 H3.6 a1.6 1.6 0 0 0-1.6 1.6 V18.6 a2.2 2.2 0 0 0 2.2 2.2 H12"/><path d="M2 17.2 a2 2 0 0 1 2-1.7 H11"/><path d="M5.5 6 H12 M5.5 9.2 H10"/><circle cx="18" cy="17" r="3.4" fill="#111" stroke="none"/><path d="M18 12.2 V21.8 M13.2 17 H22.8 M14.6 13.6 L21.4 20.4 M21.4 13.6 L14.6 20.4" stroke-width="2.2"/><circle cx="18" cy="17" r="1.2" fill="#fff" stroke="none"/></svg>
<div class="t" style="top:827.09px;font-size:16.5px;line-height:16.5px;color:#222;letter-spacing:0.439px;left:387.00px;">Courses</div>
<svg class="a" style="left:347.00px;top:862.18px;" width="22" height="22" viewBox="0 0 24 24" fill="none" stroke="#111" stroke-width="2" stroke-linecap="round" stroke-linejoin="round"><rect x="2.5" y="2.5" width="19" height="19" rx="2.6"/><path d="M7 7.8 H7.2 M10.5 7.8 H17 M7 12 H7.2 M10.5 12 H17 M7 16.2 H7.2 M10.5 16.2 H17" stroke-width="2.2"/></svg>
<div class="t" style="top:865.71px;font-size:16.5px;line-height:16.5px;color:#222;letter-spacing:0.399px;left:387.00px;">Categories</div>
<svg class="a" style="left:347.00px;top:900.80px;" width="22" height="22" viewBox="0 0 24 24" fill="none" stroke="#111" stroke-width="2" stroke-linecap="round" stroke-linejoin="round"><path d="M12 3.5 V21 M12 3.5 C10 1.5 6 2 5.5 5 C2.8 5.4 2 8.5 3.3 10.5 C1.3 12.5 2.2 16.3 4.8 16.8 C5 20 8.5 22 12 20.5 C15.5 22 19 20 19.2 16.8 C21.8 16.3 22.7 12.5 20.7 10.5 C22 8.5 21.2 5.4 18.5 5 C18 2 14 1.5 12 3.5 Z"/><path d="M12 10 H8 V7.5 M12 14.5 H9 V17.5 M12 12 H16 V15.5 M15 7 V9.5" stroke-width="1.4"/></svg>
<div class="t" style="top:904.33px;font-size:16.5px;line-height:16.5px;color:#222;letter-spacing:0.321px;left:387.00px;">Skills</div>
<svg class="a" style="left:347.00px;top:939.42px;" width="22" height="22" viewBox="0 0 24 24" fill="none" stroke="#111" stroke-width="2" stroke-linecap="round" stroke-linejoin="round"><path d="M7 5.2 H17 C20.5 5.2 22 8 22.3 12.5 C22.6 17 22 19 19.8 19 C18 19 17 16.5 15.5 16 H8.5 C7 16.5 6 19 4.2 19 C2 19 1.4 17 1.7 12.5 C2 8 3.5 5.2 7 5.2 Z"/><path d="M7.4 9.2 V13.4 M5.3 11.3 H9.5" stroke-width="1.8"/><circle cx="15.3" cy="10" r="0.9" fill="#111"/><circle cx="17.6" cy="12.5" r="0.9" fill="#111"/></svg>
<div class="t" style="top:942.95px;font-size:16.5px;line-height:16.5px;color:#222;letter-spacing:0.382px;left:386.30px;">Gamification</div>
<svg class="a" style="left:347.00px;top:978.04px;" width="22" height="22" viewBox="0 0 24 24" fill="none" stroke="#111" stroke-width="2" stroke-linecap="round" stroke-linejoin="round"><path d="M1.5 2.5 H4 L6.5 14.5 H13 M5 5.5 H19.5 L18.6 9.5"/><circle cx="7" cy="19.8" r="1.3" fill="#111"/><circle cx="17.8" cy="17.5" r="4.4"/><path d="M13.4 17.5 H22.2 M17.8 13.1 V21.9 M15.8 13.8 C14.6 16 14.6 19 15.8 21.2 M19.8 13.8 C21 16 21 19 19.8 21.2" stroke-width="1.3"/></svg>
<div class="t" style="top:981.57px;font-size:16.5px;line-height:16.5px;color:#222;letter-spacing:0.468px;left:386.30px;">E-commerce</div>
<svg class="a" style="left:347.00px;top:1016.66px;" width="22" height="22" viewBox="0 0 24 24" fill="none" stroke="#111" stroke-width="2" stroke-linecap="round" stroke-linejoin="round"><path d="M3 7 H8 a2.6 2.6 0 1 1 5 0 H16 V11 a2.6 2.6 0 1 1 0 5 V21 H3 Z" fill="#111" stroke="none"/><path d="M16 2.5 H21.5 V8 L19 8 L16 5.5 Z" fill="#111" stroke="none"/><path d="M6.5 17.5 L11.5 12.5 M11.5 12.5 V16 M11.5 12.5 H8" stroke="#fff" stroke-width="1.6"/></svg>
<div class="t" style="top:1020.19px;font-size:16.5px;line-height:16.5px;color:#222;letter-spacing:0.359px;left:386.30px;">Integrations</div>
<svg class="a" style="left:347.00px;top:1055.28px;" width="22" height="22" viewBox="0 0 24 24" fill="none" stroke="#111" stroke-width="2" stroke-linecap="round" stroke-linejoin="round"><rect x="3.6" y="10.6" width="16.8" height="11" rx="2.5"/><path d="M7.4 10.6 V7.2 a4.6 4.6 0 0 1 9.2 0 V10.6"/></svg>
<div class="t" style="top:1058.81px;font-size:16.5px;line-height:16.5px;color:#222;letter-spacing:0.373px;left:386.30px;">Security</div>
<svg class="a" style="left:347.00px;top:1093.90px;" width="22" height="22" viewBox="0 0 24 24" fill="none" stroke="#111" stroke-width="2" stroke-linecap="round" stroke-linejoin="round"><path d="M12.8 21.5 H5.6 a2.4 2.4 0 0 1-2.4-2.4 V4.9 a2.4 2.4 0 0 1 2.4-2.4 H10 L15.2 7.5 V10.5"/><path d="M10 2.5 V7.5 H15.2"/><path d="M9 15.5 H21.5 M18.2 12.2 L21.5 15.5 L18.2 18.8"/></svg>
<div class="t" style="top:1097.43px;font-size:16.5px;line-height:16.5px;color:#222;letter-spacing:0.384px;left:386.30px;">Import-Export</div>
<svg class="a" style="left:500px;top:1055px" width="135" height="95" viewBox="500 1055 135 95"><path d="M506.2 1106.6 L565.9 1068.2 A38.6 38.6 0 1 1 570.3 1137.4 Z" fill="#0aa5e8"/><path d="M584.9 1117.6 H589.2 V1082.8 H585.6 L575.8 1086.6 V1091.6 L584.9 1088.2 Z" fill="#fff"/></svg>
</div></body></html>
